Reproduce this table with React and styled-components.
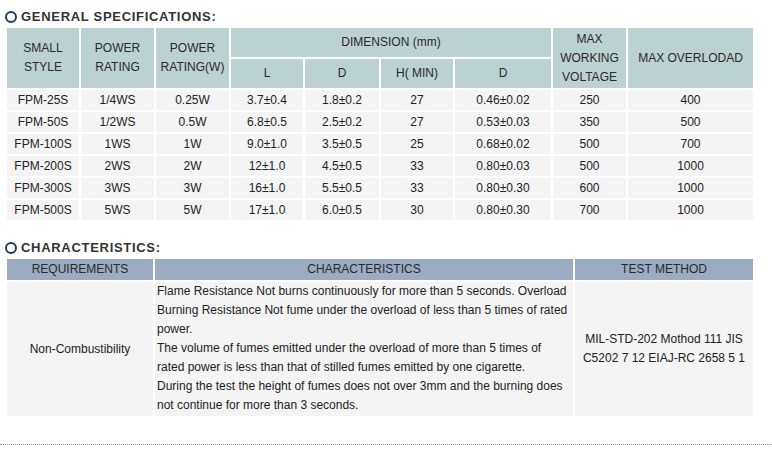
import React from 'react';
import styled, { createGlobalStyle } from 'styled-components';

const specs = [
    ['FPM-25S', '1/4WS', '0.25W', '3.7±0.4', '1.8±0.2', '27', '0.46±0.02', '250', '400'],
    ['FPM-50S', '1/2WS', '0.5W', '6.8±0.5', '2.5±0.2', '27', '0.53±0.03', '350', '500'],
    ['FPM-100S', '1WS', '1W', '9.0±1.0', '3.5±0.5', '25', '0.68±0.02', '500', '700'],
    ['FPM-200S', '2WS', '2W', '12±1.0', '4.5±0.5', '33', '0.80±0.03', '500', '1000'],
    ['FPM-300S', '3WS', '3W', '16±1.0', '5.5±0.5', '33', '0.80±0.30', '600', '1000'],
    ['FPM-500S', '5WS', '5W', '17±1.0', '6.0±0.5', '30', '0.80±0.30', '700', '1000'],
];

const specWidths = [72, 73, 73, 72, 74, 72, 96, 73, 125];

const characteristics = [
    'Flame Resistance Not burns continuously for more than 5 seconds. Overload Burning Resistance Not fume under the overload of less than 5 times of rated power.',
    'The volume of fumes emitted under the overload of more than 5 times of rated power is less than that of stilled fumes emitted by one cigarette.',
    'During the test the height of fumes does not over 3mm and the burning does not continue for more than 3 seconds.',
];

const App = () => (
    <Page>
        <GlobalStyle />
        <SectionTitle>
            <Ring />
            GENERAL SPECIFICATIONS:
        </SectionTitle>
        <Table>
            <colgroup>
                {specWidths.map((w, i) => <col key={i} style={{ width: w }} />)}
            </colgroup>
            <thead>
                <tr>
                    <Head rowSpan={2}>SMALL<br />STYLE</Head>
                    <Head rowSpan={2}>POWER<br />RATING</Head>
                    <Head rowSpan={2}>POWER<br />RATING(W)</Head>
                    <Head colSpan={4} $height={29}>DIMENSION (mm)</Head>
                    <Head rowSpan={2}>MAX<br />WORKING<br />VOLTAGE</Head>
                    <Head rowSpan={2}>MAX OVERLODAD</Head>
                </tr>
                <tr>
                    <Head $height={29}>L</Head>
                    <Head>D</Head>
                    <Head>H( MIN)</Head>
                    <Head>D</Head>
                </tr>
            </thead>
            <tbody>
                {specs.map((row) => (
                    <tr key={row[0]}>
                        {row.map((value, i) => <Cell key={i}>{value}</Cell>)}
                    </tr>
                ))}
            </tbody>
        </Table>

        <SectionTitle $gap>
            <Ring />
            CHARACTERISTICS:
        </SectionTitle>
        <Table>
            <colgroup>
                <col style={{ width: 146 }} />
                <col style={{ width: 418 }} />
                <col style={{ width: 178 }} />
            </colgroup>
            <thead>
                <tr>
                    <Head $dark $height={21}>REQUIREMENTS</Head>
                    <Head $dark>CHARACTERISTICS</Head>
                    <Head $dark>TEST METHOD</Head>
                </tr>
            </thead>
            <tbody>
                <tr>
                    <Cell>Non-Combustibility</Cell>
                    <TextCell>
                        {characteristics.map((line, i) => <div key={i}>{line}</div>)}
                    </TextCell>
                    <Cell>MIL-STD-202 Mothod 111 JIS<br />C5202 7 12 EIAJ-RC 2658 5 1</Cell>
                </tr>
            </tbody>
        </Table>
        <Divider />
    </Page>
);

export default App;

const GlobalStyle = createGlobalStyle`
    body {
        margin: 0;
        background: #fff;
        font-family: 'Liberation Sans', Arial, sans-serif;
    }
`;

const Page = styled.div`
    padding: 7px 0 0 5px;
    width: 772px;
    box-sizing: border-box;
`;

const SectionTitle = styled.h3`
    display: flex;
    align-items: center;
    gap: 4px;
    margin: ${(p) => (p.$gap ? '16px' : '0')} 0 0 0;
    height: 19px;
    font-size: 13px;
    font-weight: bold;
    letter-spacing: 0.7px;
    color: #333;
`;

const Ring = styled.span`
    display: inline-block;
    width: 8px;
    height: 8px;
    border: 2.5px solid #1d3d66;
    border-radius: 50%;
    margin: 1px 0 0 0;
`;

const Table = styled.table`
    table-layout: fixed;
    border-collapse: separate;
    border-spacing: 2px;
    width: 750px;
    font-size: 12px;
    color: #222;
`;

const Head = styled.th`
    background: ${(p) => (p.$dark ? '#9babc1' : '#bcd1d2')};
    font-weight: normal;
    color: #2a2a2a;
    padding: 0;
    line-height: 19px;
    height: ${(p) => (p.$height ? `${p.$height}px` : 'auto')};
`;

const Cell = styled.td`
    background: #f4f4f4;
    text-align: center;
    padding: 0;
    height: 20px;
    line-height: 19px;
`;

const TextCell = styled.td`
    background: #f4f4f4;
    padding: 0 3px 1px 2px;
    line-height: 19px;
`;

const Divider = styled.div`
    margin: 26px 0 0 -5px;
    border-top: 1px dotted #999;
    width: 772px;
`;
